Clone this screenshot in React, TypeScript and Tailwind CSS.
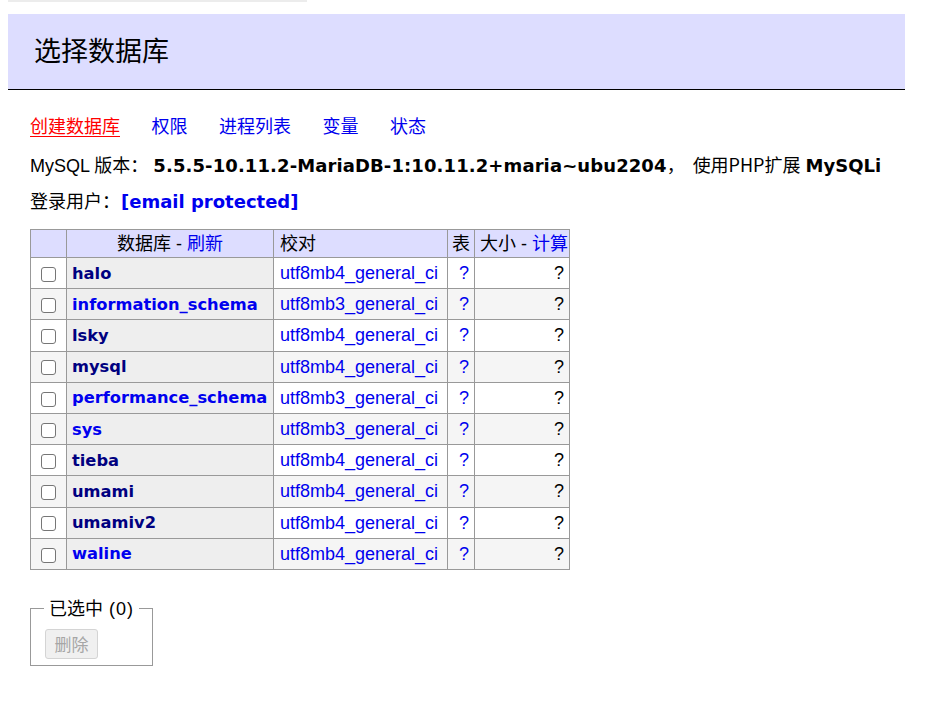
import React from "react";

type Db = { name: string; coll: string; visited: boolean };

const dbs: Db[] = [
  { name: "halo", coll: "utf8mb4_general_ci", visited: true },
  { name: "information_schema", coll: "utf8mb3_general_ci", visited: false },
  { name: "lsky", coll: "utf8mb4_general_ci", visited: true },
  { name: "mysql", coll: "utf8mb4_general_ci", visited: true },
  { name: "performance_schema", coll: "utf8mb3_general_ci", visited: false },
  { name: "sys", coll: "utf8mb3_general_ci", visited: false },
  { name: "tieba", coll: "utf8mb4_general_ci", visited: true },
  { name: "umami", coll: "utf8mb4_general_ci", visited: true },
  { name: "umamiv2", coll: "utf8mb4_general_ci", visited: true },
  { name: "waline", coll: "utf8mb4_general_ci", visited: false },
];

const BOLD = "font-['DejaVu_Sans','Noto_Sans_CJK_SC',sans-serif] font-bold";

function Check() {
  return (
    <span className="inline-block w-[15px] h-[15px] border border-[#767676] rounded-[3px] bg-white align-middle" />
  );
}

export default function App() {
  return (
    <div className="min-h-[718px] bg-white text-black text-[18px] leading-[22px] font-['Liberation_Sans','Noto_Sans_CJK_SC',sans-serif]">
      <div className="ml-[8px] w-[299px] h-[2px] bg-[#ececec]" />
      <div className="ml-[8px] w-[897px] mt-[12px]">
        <h2 className="h-[76px] bg-[#ddddff] border-b border-black flex items-center pl-[26px] text-[27px] leading-[34px] font-normal text-black">
          选择数据库
        </h2>
        <div className="pl-[22px]">
          <p className="mt-[26px] flex gap-[31.5px]">
            <a className="text-[#ff0000] underline underline-offset-[3px] decoration-1">创建数据库</a>
            <a className="text-[#0000ee]">权限</a>
            <a className="text-[#0000ee]">进程列表</a>
            <a className="text-[#0000ee]">变量</a>
            <a className="text-[#0000ee]">状态</a>
          </p>
          <p className="mt-[15px] whitespace-nowrap">
            MySQL 版本：<b className={`${BOLD} ml-[5px] tracking-[0.1px]`}>5.5.5-10.11.2-MariaDB-1:10.11.2+maria~ubu2204</b>，
            <span className="ml-[8px] font-['Noto_Sans_CJK_SC',sans-serif]">使用PHP扩展</span> <b className={BOLD}>MySQLi</b>
          </p>
          <p className="mt-[14px] whitespace-nowrap">
            登录用户：<b className={`${BOLD} ml-[1px] text-[#0000ee]`}>[email&#160;protected]</b>
          </p>
          <table className="mt-[16px] border-collapse table-fixed w-[539px]">
            <colgroup>
              <col className="w-[36px]" />
              <col className="w-[207px]" />
              <col className="w-[174px]" />
              <col className="w-[27px]" />
              <col className="w-[95px]" />
            </colgroup>
            <thead>
              <tr>
                <td className="h-[28px] border border-[#999] bg-[#ddddff] p-0"></td>
                <th className="h-[28px] border border-[#999] bg-[#ddddff] font-normal text-center px-[5px] py-0">
                  数据库 - <a className="text-[#0000ee]">刷新</a>
                </th>
                <td className="h-[28px] border border-[#999] bg-[#ddddff] px-[6px] py-0">校对</td>
                <td className="h-[28px] border border-[#999] bg-[#ddddff] px-[4px] py-0">表</td>
                <td className="h-[28px] border border-[#999] bg-[#ddddff] px-[5px] py-0 whitespace-nowrap">
                  大小 - <a className="text-[#0000ee]">计算</a>
                </td>
              </tr>
            </thead>
            <tbody>
              {dbs.map((d, i) => {
                const odd = i % 2 === 1 ? "bg-[#f5f5f5]" : "bg-white";
                return (
                  <tr key={d.name}>
                    <td className={`h-[31.2px] border border-[#999] ${odd} p-0 text-center`}>
                      <Check />
                    </td>
                    <th className="h-[31.2px] border border-[#999] bg-[#eeeeee] text-left px-[5px] py-0 whitespace-nowrap">
                      <a className={`${BOLD} text-[16.3px] ${d.visited ? "text-[#000080]" : "text-[#0000ee]"}`}>{d.name}</a>
                    </th>
                    <td className={`h-[31.2px] border border-[#999] ${odd} px-[6px] py-0 whitespace-nowrap`}>
                      <a className="text-[#0000ee]">{d.coll}</a>
                    </td>
                    <td className={`h-[31.2px] border border-[#999] ${odd} px-[5px] py-0 text-right`}>
                      <a className="text-[#0000ee]">?</a>
                    </td>
                    <td className={`h-[31.2px] border border-[#999] ${odd} px-[5px] py-0 text-right`}>?</td>
                  </tr>
                );
              })}
            </tbody>
          </table>
          <fieldset className="mt-[28px] w-[123px] border border-[#999] pl-[13px] pr-[13px] pt-[9px] pb-[6px]">
            <legend className="px-[5px] leading-[22px]">
              已选中<span className="tracking-[1px]"> (0)</span>
            </legend>
            <button
              disabled
              className="ml-[1px] w-[53px] h-[30px] bg-[#f0f0f0] border border-[#d4d4d4] rounded-[3px] text-[#a6a6a6] text-[17px] leading-[20px] font-['Noto_Sans_CJK_SC',sans-serif]"
            >
              删除
            </button>
          </fieldset>
        </div>
      </div>
    </div>
  );
}
